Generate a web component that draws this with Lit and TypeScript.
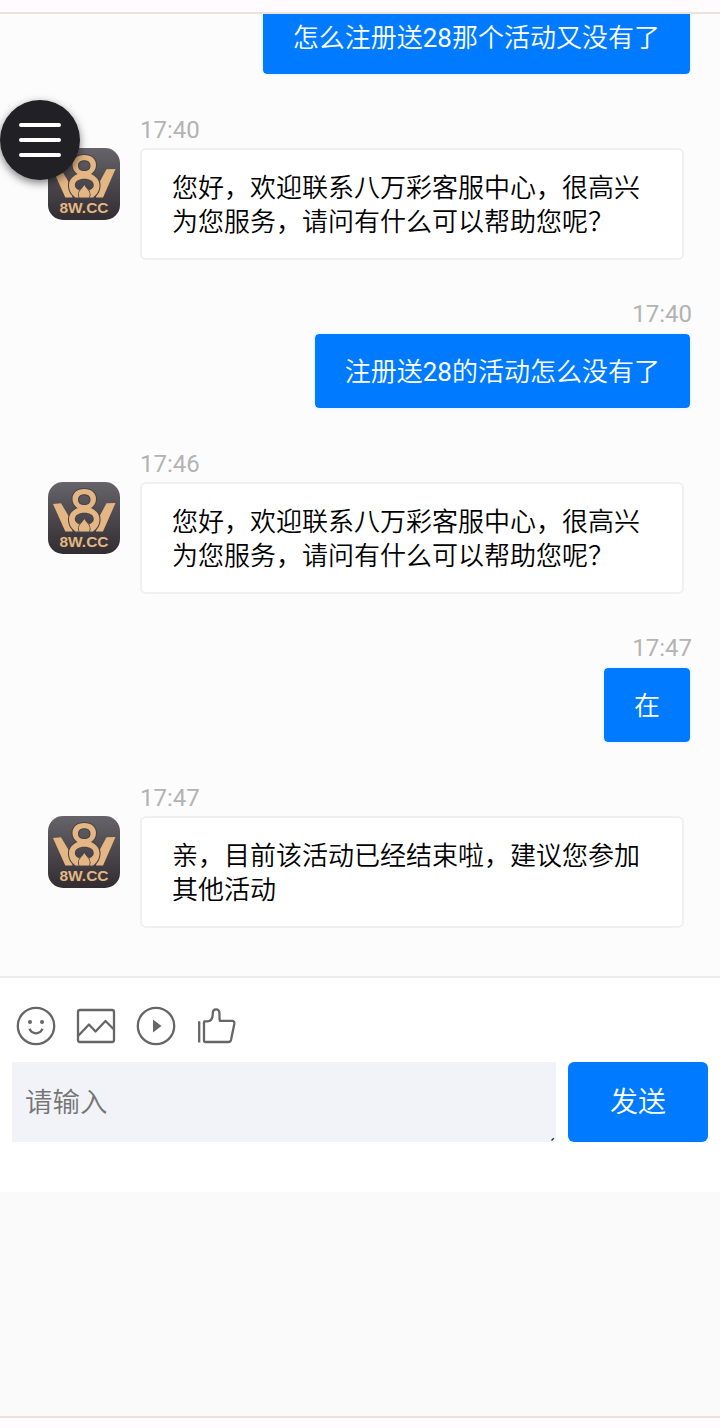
import { LitElement, html, css, svg } from "lit";
import { customElement, property } from "lit/decorators.js";

interface Message {
  from: "agent" | "user";
  time?: string;
  lines: string[];
}

const messages: Message[] = [
  { from: "user", lines: ["怎么注册送28那个活动又没有了"] },
  { from: "agent", time: "17:40", lines: ["您好，欢迎联系八万彩客服中心，很高兴", "为您服务，请问有什么可以帮助您呢？"] },
  { from: "user", time: "17:40", lines: ["注册送28的活动怎么没有了"] },
  { from: "agent", time: "17:46", lines: ["您好，欢迎联系八万彩客服中心，很高兴", "为您服务，请问有什么可以帮助您呢？"] },
  { from: "user", time: "17:47", lines: ["在"] },
  { from: "agent", time: "17:47", lines: ["亲，目前该活动已经结束啦，建议您参加", "其他活动"] },
];

@customElement("brand-avatar")
export class BrandAvatar extends LitElement {
  static styles = css`
    :host { display: block; width: 72px; height: 72px; }
    .logo { display: block; }
    .label { font: 700 15.500px "Liberation Sans", Arial, sans-serif; }
  `;

  render() {
    return html`<svg class="logo" width="72" height="72" viewBox="0 0 72 72">
      <defs>
        <linearGradient id="bg" x1="0" y1="0" x2="0" y2="1">
          <stop offset="0" stop-color="#66646a" />
          <stop offset="0.5" stop-color="#4b474c" />
          <stop offset="1" stop-color="#312d31" />
        </linearGradient>
      </defs>
      <rect width="72" height="72" rx="15" fill="url(#bg)" />
      <g fill="#e3b683">
        <path d="M5 22 L13 21.300 L23 38 L24.500 49.500 H17.300 Z" />
        <path d="M67.500 21 L58.500 21.300 L49.500 38 L48 49.500 H55 Z" />
        <path fill-rule="evenodd" stroke="#48444a" stroke-width="2.200" paint-order="stroke" d="M36.300 7 C29 7 24.500 11 24.500 17 C24.500 21 26.500 24 29.500 26 C24 28.500 21 32.500 21 37.500 C21 42.500 23.500 46.500 27.500 49.500 L45 49.500 C49 46.500 51.500 42.500 51.500 37.500 C51.500 32.500 48.500 28.500 43 26 C46 24 48 21 48 17 C48 11 43.500 7 36.300 7 Z M36.300 12.300 C40.300 12.300 42.500 14.500 42.500 17.700 C42.500 21 40.300 23 36.300 23 C32.300 23 30 21 30 17.700 C30 14.500 32.300 12.300 36.300 12.300 Z M36.300 30.700 C42 30.700 45.800 33 45.800 37 C45.800 39.500 44.300 41 41.500 42.200 L36.300 38 L31 42.200 C28.300 41 26.800 39.500 26.800 37 C26.800 33 31 30.700 36.300 30.700 Z" />
        <path d="M36.300 37 C37.500 39.500 39.500 41 41 43.500 C42 45.500 42 47.500 41 49.500 H31.500 C30.500 47.500 30.500 45.500 31.500 43.500 C33 41 35 39.500 36.300 37 Z" stroke="#48444a" stroke-width="1.600" paint-order="stroke" />
      </g>
      <text class="label" x="11.500" y="65.200" textLength="49" lengthAdjust="spacingAndGlyphs" fill="#e3b683">8W.CC</text>
    </svg>`;
  }
}

@customElement("chat-message")
export class ChatMessage extends LitElement {
  @property({ attribute: false }) message!: Message;

  static styles = css`
    :host { display: block; flex: none; }
    .row { display: flex; gap: 20px; padding-left: 48px; }
    .row.user { justify-content: flex-end; padding: 0 28px 0 0; }
    .avatar { margin-top: 32px; }
    .body { display: flex; flex-direction: column; align-items: flex-start; gap: 4px; }
    .user .body { align-items: flex-end; }
    .time { font-size: 24px; line-height: 28px; color: #b3b3b3; }
    .bubble {
      box-sizing: border-box;
      border: 2px solid #f0f0f0;
      border-radius: 6px;
      padding: 21px 30px 19px;
      background: #fff;
      color: #000;
      font-size: 26px;
      font-weight: 350;
      line-height: 34px;
      white-space: nowrap;
    }
    .digits { font-weight: 400; }
    .agent .bubble { width: 544px; }
    .user .bubble { border-color: #eef8fe; background: #007bff; background-clip: padding-box; color: #fff; }
  `;

  private renderLine(line: string) {
    return line
      .split(/(\d+)/)
      .map((part) => (/^\d+$/.test(part) ? html`<span class="digits">${part}</span>` : part));
  }

  render() {
    const { from, time, lines } = this.message;
    return html`<div class="row ${from}">
      ${from === "agent" ? html`<brand-avatar class="avatar"></brand-avatar>` : null}
      <div class="body">
        ${time ? html`<div class="time">${time}</div>` : null}
        <div class="bubble">${lines.map((line) => html`<div>${this.renderLine(line)}</div>`)}</div>
      </div>
    </div>`;
  }
}

const toolIcons = [
  svg`<circle cx="20" cy="20" r="18.200"/><circle cx="14" cy="16" r="2" class="solid"/><circle cx="26" cy="16" r="2" class="solid"/><path d="M13.500 22.800C15 26 17.200 27.300 20 27.300S25 26 26.500 22.800"/>`,
  svg`<rect x="2" y="4" width="36" height="32" rx="2"/><path d="M2.500 29.500L13 18.500L19.500 25.500L29.500 15L38 23.500"/>`,
  svg`<circle cx="20" cy="20" r="18.200"/><path class="solid" d="M17 13.500L25.500 20L17 26.500Z"/>`,
  svg`<path d="M3.200 15.200V36.500M8 16V34.500Q8 36 9.500 36H32.500Q34.500 36 35 34L38.300 18Q38.700 14.800 36 14.800H23.800C23.300 13 23.500 10.500 23.500 7.500C23.500 4.600 22 3.300 20 3.300C17.800 3.300 16.800 4.500 16.800 7C16.800 11 15.500 15.300 11.500 15.300H8.700Q8 15.300 8 16"/>`,
];

@customElement("app-root")
export class AppRoot extends LitElement {
  static styles = css`
    :host {
      display: block;
      font-family: Roboto, "Noto Sans CJK SC", sans-serif;
    }
    .page {
      position: relative;
      box-sizing: border-box;
      display: flex;
      flex-direction: column;
      height: 1428px;
      padding: 12px 0 10px;
      overflow: hidden;
      background: #fffbff;
    }
    .view {
      flex: 1;
      min-height: 0;
      display: flex;
      flex-direction: column;
      border-top: 2px solid #ebe2da;
      border-bottom: 2px solid #ebe2da;
      background: #fafafa;
    }
    .history {
      box-sizing: border-box;
      height: 962px;
      flex: none;
      display: flex;
      flex-direction: column;
      justify-content: flex-end;
      gap: 40px;
      padding-bottom: 48px;
      overflow: hidden;
      background: #fcfcfc;
    }
    .composer {
      box-sizing: border-box;
      height: 216px;
      flex: none;
      border-top: 2px solid #ebebeb;
      padding: 28px 12px 0;
      background: #fff;
    }
    .tools { display: flex; gap: 20px; padding: 0 4px; margin-bottom: 16px; }
    .tool { width: 40px; height: 40px; fill: none; stroke: #666; stroke-width: 2.300; stroke-linejoin: round; }
    .solid { fill: #666; stroke: none; }
    .entry { display: flex; gap: 12px; }
    .input {
      box-sizing: border-box;
      flex: 1;
      height: 80px;
      display: flex;
      justify-content: space-between;
      padding-left: 13px;
      background: #f2f3f8;
      color: #757575;
      font-size: 27.500px;
      font-weight: 350;
      line-height: 82px;
    }
    .grip { align-self: flex-end; width: 6px; height: 6px; }
    .send {
      width: 140px;
      height: 80px;
      border: 0;
      border-radius: 6px;
      padding: 2px 0 0;
      background: #007bff;
      color: #fff;
      font: inherit;
      font-size: 28px;
      font-weight: 350;
      line-height: 78px;
    }
    .menu {
      position: absolute;
      left: 0;
      top: 100px;
      width: 80px;
      height: 80px;
      border-radius: 50%;
      background: #212025;
      box-shadow: 0 3px 8px rgba(0, 0, 0, 0.5);
      display: flex;
      flex-direction: column;
      align-items: center;
      justify-content: center;
      gap: 11.300px;
    }
    .bar { width: 42px; height: 4px; border-radius: 2px; background: #fff; }
  `;

  render() {
    return html`<main class="page">
      <div class="view">
        <section class="history">
          ${messages.map((m) => html`<chat-message .message=${m}></chat-message>`)}
        </section>
        <section class="composer">
          <div class="tools">
            ${toolIcons.map((icon) => html`<svg class="tool" viewBox="0 0 40 40">${icon}</svg>`)}
          </div>
          <div class="entry">
            <div class="input">
              <span>请输入</span>
              <svg class="grip" viewBox="0 0 6 6"><path d="M1.500 4.500L3.800 2.300" stroke="#333" stroke-width="1.500" /></svg>
            </div>
            <button class="send">发送</button>
          </div>
        </section>
      </div>
      <div class="menu"><div class="bar"></div><div class="bar"></div><div class="bar"></div></div>
    </main>`;
  }
}
